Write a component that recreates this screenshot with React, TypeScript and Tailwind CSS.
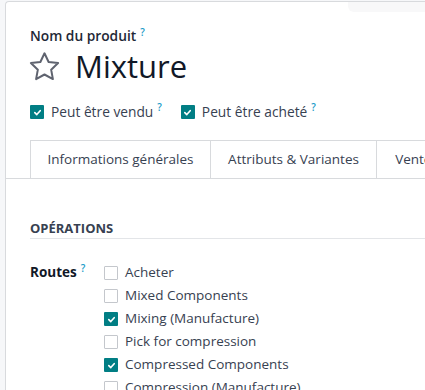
import React from 'react';

const routes = [
  { label: 'Acheter', checked: false },
  { label: 'Mixed Components', checked: false },
  { label: 'Mixing (Manufacture)', checked: true },
  { label: 'Pick for compression', checked: false },
  { label: 'Compressed Components', checked: true },
  { label: 'Compression (Manufacture)', checked: false },
];

const tabs = [
  { label: 'Informations générales', w: 'w-[181px] border-l' },
  { label: 'Attributs & Variantes', w: 'w-[166px]' },
  { label: 'Ventes', w: 'w-[80px]' },
];

function Box({ checked }: { checked: boolean }) {
  if (!checked) {
    return <span className="w-[14px] h-[14px] shrink-0 border border-[#c4c7cc] bg-white rounded-[1px]" />;
  }
  return (
    <span className="w-[14px] h-[14px] shrink-0 bg-[#017e84] flex items-center justify-center rounded-[1px]">
      <svg width="9" height="9" viewBox="0 0 10 10" fill="none">
        <path d="M2 5.2 L4.2 7.3 L8 3" stroke="white" strokeWidth="1.8" strokeLinecap="round" strokeLinejoin="round" />
      </svg>
    </span>
  );
}

function Help() {
  return <sup className="text-[#1a9bc8] text-[10px] font-semibold ml-[4px] -top-[5px]">?</sup>;
}

export default function App() {
  return (
    <div
      className="w-[425px] h-[390px] overflow-hidden bg-[#f6f7f9] pl-[5px] pt-[1px] flex flex-col"
      style={{ fontFamily: '"Open Sans", "Noto Sans", sans-serif' }}
    >
      <div className="flex-1 bg-white border-l border-t border-[#d8dadd] rounded-tl-[4px] flex flex-col">
        <div className="flex justify-end">
          <div className="w-[77px] h-[10px] bg-[#f8f8f9] rounded-bl-[6px]" />
        </div>

        <div className="pl-[24px] pt-[15px]">
          <div className="h-[18px] text-[13.75px] font-semibold text-[#1f2937] leading-[18px]">
            Nom du produit<Help />
          </div>
          <div className="flex items-center mt-[6px] h-[30px]">
            <svg width="31" height="29" viewBox="-0.5 -0.5 31 29" fill="none" className="shrink-0 -ml-[1px]">
              <path
                d="M15 0.8 L19.12 9.5 L28.6 10.6 L21.66 17.16 L23.4 26.6 L15 22 L6.6 26.6 L8.34 17.16 L1.4 10.6 L10.88 9.5 Z"
                stroke="#5f636f"
                strokeWidth="2"
                strokeLinejoin="round"
              />
            </svg>
            <span className="ml-[15px] text-[31px] text-[#111827] leading-[30px] whitespace-nowrap">Mixture</span>
          </div>
          <div className="flex items-center mt-[24px] h-[14px] text-[13.75px] text-[#374151]">
            <Box checked />
            <span className="ml-[7px] font-medium whitespace-nowrap">Peut être vendu</span>
            <Help />
            <span className="ml-[19px]" />
            <Box checked />
            <span className="ml-[7px] font-medium whitespace-nowrap">Peut être acheté</span>
            <Help />
          </div>
        </div>

        <div className="mt-[21px] border-b border-[#d8dadd] pl-[24px] flex">
          {tabs.map((t) => (
            <div
              key={t.label}
              className={
                'h-[38px] shrink-0 flex items-center justify-center border-t border-r border-[#d8dadd] text-[13.5px] text-[#374151] whitespace-nowrap ' +
                t.w
              }
            >
              {t.label}
            </div>
          ))}
        </div>

        <div className="pl-[24px] pt-[41px]">
          <div className="text-[13px] font-bold text-[#374151] leading-[16px] pb-[2px] border-b border-[#e3e5e8]">
            OPÉRATIONS
          </div>
          <div className="flex mt-[26px]">
            <div className="w-[74px] text-[13.5px] font-bold text-[#111827] leading-[14px]">
              Routes<Help />
            </div>
            <div className="flex flex-col gap-[7px]">
              {routes.map((r) => (
                <div key={r.label} className="flex items-center h-[16px] text-[13.5px] text-[#374151] whitespace-nowrap">
                  <Box checked={r.checked} />
                  <span className="ml-[7px] -mt-[1px]">{r.label}</span>
                </div>
              ))}
            </div>
          </div>
        </div>
      </div>
    </div>
  );
}
